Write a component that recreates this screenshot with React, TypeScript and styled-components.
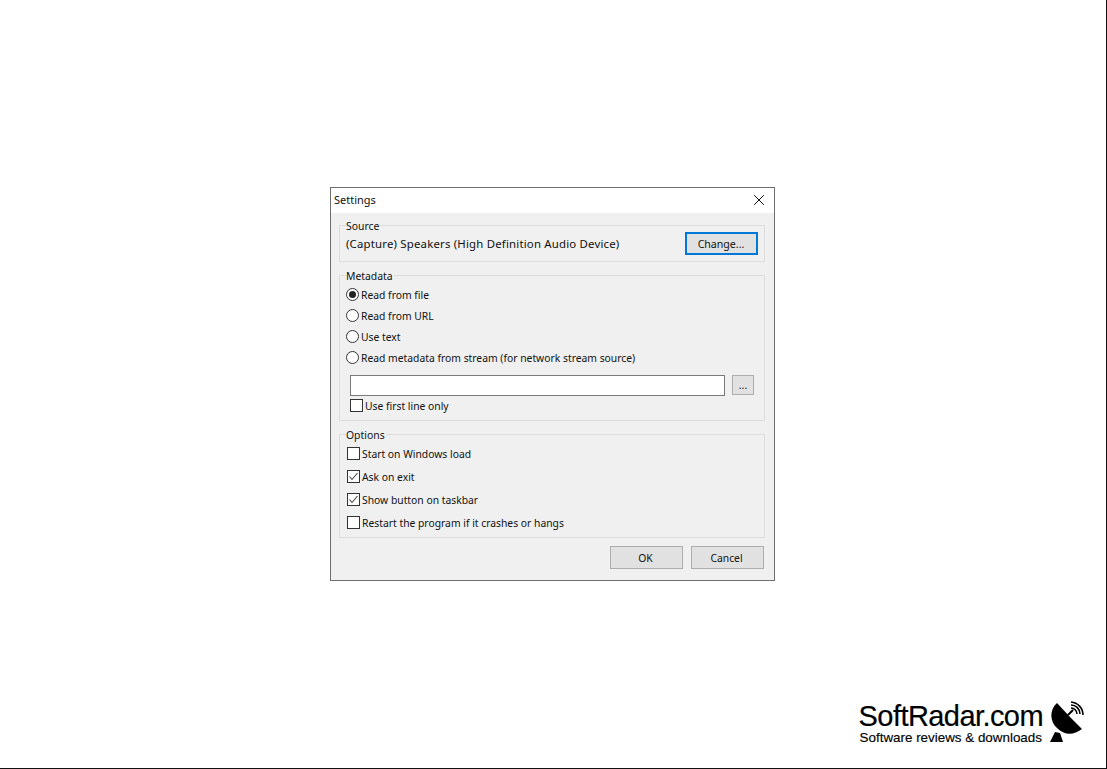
import React from "react";
import styled, { createGlobalStyle } from "styled-components";

const Global = createGlobalStyle`
  html, body { margin: 0; padding: 0; background: #fff; }
  #root { width: 1107px; height: 769px; }
  * { box-sizing: border-box; }
`;

const Page = styled.div`
  width: 1107px;
  height: 769px;
  background: #fff;
  border-right: 1px solid #111;
  border-bottom: 1px solid #111;
  display: flex;
  flex-direction: column;
  justify-content: space-between;
  padding: 187px 0 0 330px;
  font-family: "Noto Sans", sans-serif;
  font-size: 10.33px;
  color: #111;
`;

const Dialog = styled.div`
  width: 445px;
  height: 394px;
  background: #f0f0f0;
  border: 1px solid #6e6e6e;
  display: flex;
  flex-direction: column;
`;

const TitleBar = styled.div`
  height: 25px;
  flex: none;
  background: #fff;
  display: flex;
  align-items: center;
  justify-content: space-between;
  padding: 0 10px 2px 3px;
  font-size: 11px;
`;

const Body = styled.div`
  flex: 1;
  padding: 5px 9px 0 8px;
  display: flex;
  flex-direction: column;
`;

const Group = styled.fieldset<{ $h: number; $gap?: number }>`
  margin: 0 0 ${(p) => p.$gap ?? 0}px 0;
  padding: 0;
  width: 426px;
  height: ${(p) => p.$h}px;
  min-width: 0;
  border: 1px solid #dcdcdc;
`;

const Legend = styled.legend`
  margin-left: 6px;
  padding: 1px 1px 0 0;
  font-size: 10.4px;
  line-height: 14px;
  height: 14px;
`;

const SourceRow = styled.div`
  display: flex;
  align-items: center;
  justify-content: space-between;
  padding: 0 6px 0 6px;
`;

const SourceName = styled.span`
  font-size: 11.4px;
  letter-spacing: 0.19px;
`;

const ChangeButton = styled.button`
  width: 73px;
  height: 23px;
  background: #e1e1e1;
  border: 2px solid #0078d7;
  font: inherit;
  font-size: 10.6px;
  color: inherit;
  padding: 0 1px 0 0;
`;

const RadioList = styled.div`
  display: flex;
  flex-direction: column;
  padding: 2px 0 0 6px;
`;

const Row = styled.label<{ $h: number }>`
  height: ${(p) => p.$h}px;
  display: flex;
  align-items: center;
  gap: 2px;
`;

const Radio = styled.span<{ $on?: boolean }>`
  width: 13px;
  height: 13px;
  border: 1px solid #333;
  border-radius: 50%;
  background: #fff;
  display: flex;
  align-items: center;
  justify-content: center;
  flex: none;
  &::after {
    content: "";
    width: 7px;
    height: 7px;
    border-radius: 50%;
    background: ${(p) => (p.$on ? "#222" : "transparent")};
  }
`;

const Box = styled.span`
  width: 13px;
  height: 13px;
  border: 1px solid #333;
  background: #fff;
  flex: none;
  display: flex;
  align-items: center;
  justify-content: center;
`;

const PathRow = styled.div`
  display: flex;
  gap: 7px;
  padding: 7px 0 0 10px;
`;

const PathInput = styled.div`
  width: 375px;
  height: 21px;
  background: #fff;
  border: 1px solid #7a7a7a;
`;

const BrowseButton = styled.button`
  width: 22px;
  height: 20px;
  background: #e1e1e1;
  border: 1px solid #adadad;
  font: inherit;
  color: inherit;
  padding: 0;
`;

const FirstLine = styled.div`
  padding: 1px 0 0 10px;
`;

const OptionList = styled.div`
  display: flex;
  flex-direction: column;
  padding: 1px 0 0 7px;
`;

const Actions = styled.div`
  display: flex;
  gap: 8px;
  justify-content: flex-end;
  width: 425px;
  padding-top: 8px;
`;

const ActionButton = styled.button`
  width: 73px;
  height: 23px;
  background: #e1e1e1;
  border: 1px solid #adadad;
  font: inherit;
  color: inherit;
  padding: 0 2px 0 0;
`;

const Brand = styled.div`
  align-self: flex-end;
  display: flex;
  gap: 6px;
  align-items: flex-start;
  padding: 0 21px 24px 0;
`;

const BrandText = styled.div`
  font-family: "Liberation Sans", Arial, sans-serif;
  color: #000;
  display: flex;
  flex-direction: column;
`;

const BrandName = styled.div`
  font-size: 29px;
  line-height: 29px;
  letter-spacing: -0.57px;
  -webkit-text-stroke: 0.2px #000;
`;

const BrandTag = styled.div`
  font-size: 13.4px;
  line-height: 13px;
  padding-left: 1px;
  white-space: nowrap;
  -webkit-text-stroke: 0.15px #000;
`;

const Check = () => (
  <svg width="11" height="11" viewBox="0 0 11 11" fill="none">
    <path d="M1.5 5.5 L4 8.5 L9.5 2" stroke="#444" strokeWidth="1.1" />
  </svg>
);

const Dish = () => (
  <svg width="36" height="44" viewBox="0 0 36 44" style={{ marginTop: -2 }}>
    <path d="M8 3 C0 10 1 22 8 28 C15 35 24 36 33 29 L21 17 Z" fill="#000" />
    <path d="M19 15 L24 10" stroke="#000" strokeWidth="2" />
    <path d="M6 32 L1 42 L14 42 L11 33 Z" fill="#000" />
    <g fill="none" stroke="#000" strokeWidth="1.6">
      <path d="M22 8 A6 6 0 0 1 28 14" />
      <path d="M22 5 A9 9 0 0 1 31 14" />
      <path d="M22 2 A13 13 0 0 1 34 15" />
    </g>
  </svg>
);

export default function App() {
  return (
    <Page>
      <Global />
      <Dialog>
        <TitleBar>
          <span>Settings</span>
          <svg width="10" height="10" viewBox="0 0 10 10">
            <path d="M0.2 0.2 L9.8 9.8 M9.8 0.2 L0.2 9.8" stroke="#111" strokeWidth="1" />
          </svg>
        </TitleBar>
        <Body>
          <Group $h={44} $gap={6}>
            <Legend>Source</Legend>
            <SourceRow>
              <SourceName>(Capture) Speakers (High Definition Audio Device)</SourceName>
              <ChangeButton>Change...</ChangeButton>
            </SourceRow>
          </Group>
          <Group $h={153} $gap={6}>
            <Legend>Metadata</Legend>
            <RadioList>
              <Row $h={21}><Radio $on />Read from file</Row>
              <Row $h={21}><Radio />Read from URL</Row>
              <Row $h={21}><Radio />Use text</Row>
              <Row $h={21}><Radio />Read metadata from stream (for network stream source)</Row>
            </RadioList>
            <PathRow>
              <PathInput />
              <BrowseButton>...</BrowseButton>
            </PathRow>
            <FirstLine>
              <Row $h={17}><Box />Use first line only</Row>
            </FirstLine>
          </Group>
          <Group $h={111}>
            <Legend>Options</Legend>
            <OptionList>
              <Row $h={23}><Box />Start on Windows load</Row>
              <Row $h={23}><Box><Check /></Box>Ask on exit</Row>
              <Row $h={23}><Box><Check /></Box>Show button on taskbar</Row>
              <Row $h={23}><Box />Restart the program if it crashes or hangs</Row>
            </OptionList>
          </Group>
          <Actions>
            <ActionButton>OK</ActionButton>
            <ActionButton>Cancel</ActionButton>
          </Actions>
        </Body>
      </Dialog>
      <Brand>
        <BrandText>
          <BrandName>SoftRadar.com</BrandName>
          <BrandTag>Software reviews &amp; downloads</BrandTag>
        </BrandText>
        <Dish />
      </Brand>
    </Page>
  );
}
